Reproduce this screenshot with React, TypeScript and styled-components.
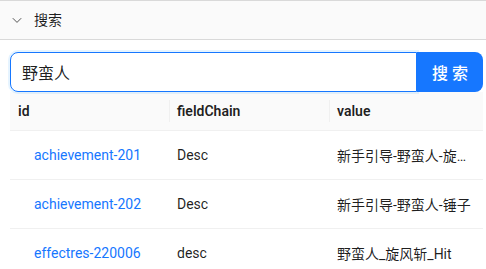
import React from "react";
import styled, { createGlobalStyle } from "styled-components";

const GlobalStyle = createGlobalStyle`
  html, body {
    margin: 0;
    padding: 0;
    background: #fff;
  }
  body {
    font-family: Roboto, "Noto Sans CJK SC", sans-serif;
    font-size: 14px;
    color: rgba(0, 0, 0, 0.88);
  }
`;

const Panel = styled.div`
  width: 486px;
  border-top: 1px solid #d9d9d9;
`;

const PanelHeader = styled.div`
  height: 38px;
  display: flex;
  align-items: center;
  gap: 12px;
  padding: 0 12px;
  background: #fafafa;
  border-bottom: 1px solid #d9d9d9;
  font-size: 14px;
  line-height: 22px;
`;

const Chevron = styled.svg`
  width: 10px;
  height: 10px;
  color: rgba(0, 0, 0, 0.75);
`;

const PanelBody = styled.div`
  padding: 12px 3px 0 10px;
`;

const SearchRow = styled.div`
  display: flex;
  height: 40px;
`;

const SearchInput = styled.input`
  flex: 1;
  min-width: 0;
  box-sizing: border-box;
  height: 40px;
  padding: 0 11px;
  border: 1px solid #1677ff;
  border-radius: 8px 0 0 8px;
  box-shadow: 0 0 0 2px rgba(5, 145, 255, 0.1);
  font: 16px Roboto, "Noto Sans CJK SC", sans-serif;
  color: rgba(0, 0, 0, 0.88);
  outline: none;
  position: relative;
  z-index: 1;
`;

const SearchButton = styled.button`
  width: 66px;
  height: 40px;
  border: none;
  border-radius: 0 8px 8px 0;
  background: #1677ff;
  color: #fff;
  font: 500 16px Roboto, "Noto Sans CJK SC", sans-serif;
  letter-spacing: 4px;
  padding: 0 0 0 4px;
  position: relative;
  z-index: 2;
`;

const Table = styled.table`
  width: 473px;
  border-collapse: collapse;
  table-layout: fixed;
`;

const HeadCell = styled.th<{ $divider?: boolean }>`
  position: relative;
  height: 38px;
  padding: 0 8px;
  background: #fafafa;
  border-bottom: 1px solid #f0f0f0;
  text-align: left;
  font-weight: 600;
  font-size: 14px;

  &::before {
    content: "";
    display: ${(p) => (p.$divider ? "block" : "none")};
    position: absolute;
    left: 0;
    top: 50%;
    width: 1px;
    height: 22px;
    transform: translateY(-50%);
    background: #f0f0f0;
  }
`;

const Cell = styled.td<{ $indent?: boolean }>`
  height: 48px;
  padding: 0 8px 0 ${(p) => (p.$indent ? 24 : 8)}px;
  border-bottom: 1px solid #f0f0f0;
  white-space: nowrap;
  overflow: hidden;
  text-overflow: ellipsis;
  font-size: 14px;
`;

const Link = styled.a`
  color: #1677ff;
  text-decoration: none;
`;

const rows = [
  { id: "achievement-201", field: "Desc", value: "新手引导-野蛮人-旋风斩" },
  { id: "achievement-202", field: "Desc", value: "新手引导-野蛮人-锤子" },
  { id: "effectres-220006", field: "desc", value: "野蛮人_旋风斩_Hit" },
];

export default function App() {
  return (
    <>
      <GlobalStyle />
      <Panel>
        <PanelHeader>
          <Chevron viewBox="0 0 10 10" fill="none">
            <path d="M0.8 3.2l4.2 4.2 4.2-4.2" stroke="currentColor" strokeWidth="0.9" />
          </Chevron>
          <span>搜索</span>
        </PanelHeader>
        <PanelBody>
          <SearchRow>
            <SearchInput defaultValue="野蛮人" />
            <SearchButton>搜索</SearchButton>
          </SearchRow>
          <Table>
            <colgroup>
              <col style={{ width: 159 }} />
              <col style={{ width: 160 }} />
              <col />
            </colgroup>
            <thead>
              <tr>
                <HeadCell>id</HeadCell>
                <HeadCell $divider>fieldChain</HeadCell>
                <HeadCell $divider>value</HeadCell>
              </tr>
            </thead>
            <tbody>
              {rows.map((r) => (
                <tr key={r.id}>
                  <Cell $indent>
                    <Link href="#">{r.id}</Link>
                  </Cell>
                  <Cell>{r.field}</Cell>
                  <Cell>{r.value}</Cell>
                </tr>
              ))}
            </tbody>
          </Table>
        </PanelBody>
      </Panel>
    </>
  );
}
